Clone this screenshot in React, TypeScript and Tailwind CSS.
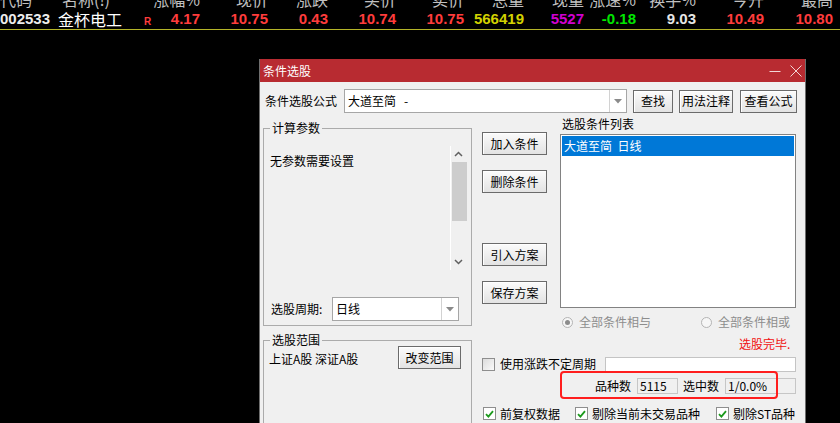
import React from "react";

const cjk = "font-['Noto_Sans_CJK_SC','Noto_Sans',sans-serif]";

const cols = [
  { head: "涨幅%", val: "4.17", w: "w-[42px]", hw: "w-[56px]", color: "text-[#ff3c3c]" },
  { head: "现价", val: "10.75", w: "w-[68px]", hw: "w-[68px]", color: "text-[#ff3c3c]" },
  { head: "涨跌", val: "0.43", w: "w-[60px]", hw: "w-[60px]", color: "text-[#ff3c3c]" },
  { head: "买价", val: "10.74", w: "w-[68px]", hw: "w-[68px]", color: "text-[#ff3c3c]" },
  { head: "卖价", val: "10.75", w: "w-[68px]", hw: "w-[68px]", color: "text-[#ff3c3c]" },
  { head: "总量", val: "566419", w: "w-[60px]", hw: "w-[60px]", color: "text-[#d2d200]" },
  { head: "现量", val: "5527", w: "w-[60px]", hw: "w-[60px]", color: "text-[#d000d0]" },
  { head: "涨速%", val: "-0.18", w: "w-[52px]", hw: "w-[52px]", color: "text-[#00e600]" },
  { head: "换手%", val: "9.03", w: "w-[60px]", hw: "w-[60px]", color: "text-[#e6e6e6]" },
  { head: "今开", val: "10.49", w: "w-[68px]", hw: "w-[68px]", color: "text-[#ff3c3c]" },
  { head: "最高", val: "10.80", w: "w-[69px]", hw: "w-[69px]", color: "text-[#ff3c3c]" },
];

function QuoteRows() {
  return (
    <div>
      <div className={`h-[10px] overflow-hidden ${cjk}`}>
        <div className="-mt-[9px] flex h-[16px] whitespace-nowrap text-[16px] leading-[16px] text-[#c0c0c0]">
          <div className="w-[62px]">代码</div>
          <div className="w-[82px]">名称(!)</div>
          {cols.map((c) => (
            <div key={c.head} className={`${c.hw} text-right`}>
              {c.head}
            </div>
          ))}
        </div>
      </div>
      <div className="flex h-[19px] items-center whitespace-nowrap">
        <div className="w-[58px] font-['Liberation_Sans',sans-serif] text-[15px] font-bold text-[#ececec]">
          002533
        </div>
        <div className={`w-[86px] text-[16px] leading-[19px] text-white ${cjk}`}>金杯电工</div>
        <div className="mt-[3px] w-[14px] font-['Liberation_Sans',sans-serif] text-[10px] font-bold text-[#ff3c3c]">
          R
        </div>
        {cols.map((c) => (
          <div
            key={c.head}
            className={`${c.w} ${c.color} text-right font-['Liberation_Sans',sans-serif] text-[15px] font-bold`}
          >
            {c.val}
          </div>
        ))}
      </div>
      <div className="h-[1px] bg-[#b4b428]" />
    </div>
  );
}

function Btn({ children, className = "" }: { children: React.ReactNode; className?: string }) {
  return (
    <div
      className={`flex h-[23px] items-center justify-center border border-[#6b6b6b] bg-gradient-to-b from-[#fbfbfb] to-[#e3e3e3] text-[12px] text-black shadow-[inset_1px_1px_0_#ffffff] ${className}`}
    >
      {children}
    </div>
  );
}

function Combo({ text, className = "" }: { text: string; className?: string }) {
  return (
    <div className={`flex border border-[#a6a6a6] bg-white ${className}`}>
      <div className="flex flex-1 items-center pl-[3px] text-[12px] text-black whitespace-pre">{text}</div>
      <div className="flex w-[17px] items-center justify-center border-l border-[#d2d2d2]">
        <svg width="8" height="5" viewBox="0 0 8 5">
          <path d="M0 0 H8 L4 4.5 Z" fill="#8a8a8a" />
        </svg>
      </div>
    </div>
  );
}

function Check({ checked }: { checked: boolean }) {
  return (
    <span
      className={`flex h-[13px] w-[13px] shrink-0 items-center justify-center border border-[#8e8e8e] ${
        checked ? "bg-white" : "bg-gradient-to-br from-[#dcdcdc] to-[#fafafa]"
      }`}
    >
      {checked && (
        <svg width="9" height="8" viewBox="0 0 9 8">
          <path d="M1 4.2 L3.4 6.6 L8 1.2" stroke="#1c9a1c" strokeWidth="1.8" fill="none" />
        </svg>
      )}
    </span>
  );
}

function Radio({ on }: { on: boolean }) {
  return (
    <span className="flex h-[11px] w-[11px] items-center justify-center rounded-full border border-[#b4b4b4] bg-[#f6f6f6]">
      {on && <span className="h-[5px] w-[5px] rounded-full bg-[#8c8c8c]" />}
    </span>
  );
}

function Chevron({ up }: { up: boolean }) {
  return (
    <svg width="9" height="6" viewBox="0 0 9 6">
      <path d={up ? "M1 5 L4.5 1.5 L8 5" : "M1 1 L4.5 4.5 L8 1"} stroke="#606060" strokeWidth="1.5" fill="none" />
    </svg>
  );
}

export default function App() {
  return (
    <div className={`h-[423px] w-[840px] overflow-hidden bg-black ${cjk}`}>
      <QuoteRows />
      <div className="ml-[259px] mt-[29px] h-[400px] w-[547px] border-x border-[#6e6e6e] bg-[#f0f0f0] text-[12px] leading-[16px] text-black">
        {/* title bar */}
        <div className="flex h-[23px] items-center bg-[#b82b31] pl-[3px] pr-[3px] text-white">
          <span className="text-[12px]">条件选股</span>
          <div className="ml-auto flex items-center gap-[9px]">
            <svg width="12" height="12" viewBox="0 0 12 12">
              <path d="M0.5 6.5 H11.5" stroke="#f2d6d6" strokeWidth="1" />
            </svg>
            <svg width="12" height="12" viewBox="0 0 12 12">
              <path d="M0.5 0.5 L11.5 11.5 M11.5 0.5 L0.5 11.5" stroke="#f2d6d6" strokeWidth="1" />
            </svg>
          </div>
        </div>

        <div className="pl-[3px]">
          {/* formula row */}
          <div className="mt-[7px] flex h-[24px] items-center">
            <div className="w-[81px] pl-[2px]">条件选股公式</div>
            <Combo text="大道至简   -" className="h-[24px] w-[283px]" />
            <Btn className="ml-[6px] w-[40px]">查找</Btn>
            <Btn className="ml-[6px] w-[54px]">用法注释</Btn>
            <Btn className="ml-[7px] w-[57px]">查看公式</Btn>
          </div>

          <div className="flex">
            {/* left column */}
            <div className="w-[209px]">
              <fieldset className="mt-[7px] h-[206px] border border-[#ababab] px-0">
                <legend className="ml-[6px] px-[2px] leading-[16px]">计算参数</legend>
                <div className="mt-[10px] flex h-[124px] pl-[6px] pr-[5px]">
                  <div className="flex-1 pt-[7px]">无参数需要设置</div>
                  <div className="flex w-[16px] flex-col items-center border-l border-white">
                    <div className="flex h-[16px] items-center justify-center">
                      <Chevron up />
                    </div>
                    <div className="ml-[1px] h-[59px] w-[15px] bg-[#cdcdcd]" />
                    <div className="flex-1" />
                    <div className="flex h-[16px] items-center justify-center">
                      <Chevron up={false} />
                    </div>
                  </div>
                </div>
                <div className="mt-[27px] flex h-[24px] items-center pl-[7px]">
                  <div className="w-[61px]">选股周期:</div>
                  <Combo text="日线" className="h-[24px] w-[127px]" />
                </div>
              </fieldset>
              <fieldset className="mt-[8px] h-[100px] border border-[#ababab] px-0">
                <legend className="ml-[6px] px-[2px] leading-[12px]">选股范围</legend>
                <div className="flex pr-[10px]">
                  <div className="mt-[5px] pl-[5px] whitespace-pre">上证A股 深证A股</div>
                  <Btn className="ml-auto w-[63px]">改变范围</Btn>
                </div>
              </fieldset>
            </div>

            {/* right block */}
            <div className="ml-[10px] w-[315px]">
              <div className="flex">
                <div className="flex w-[65px] flex-col">
                  <Btn className="mt-[19px]">加入条件</Btn>
                  <Btn className="mt-[15px]">删除条件</Btn>
                  <Btn className="mt-[50px]">引入方案</Btn>
                  <Btn className="mt-[15px]">保存方案</Btn>
                </div>
                <div className="ml-[13px] w-[237px]">
                  <div className="mt-[3px] pl-[2px]">选股条件列表</div>
                  <div className="mt-[2px] h-[174px] w-[236px] border border-[#828282] bg-white p-[1px]">
                    <div className="flex h-[20px] items-center bg-[#0078d7] pl-[2px] text-white whitespace-pre">
                      大道至简  日线
                    </div>
                  </div>
                  <div className="mt-[6px] flex h-[16px] items-center text-[#8d8d8d]">
                    <span className="ml-[2px]">
                      <Radio on />
                    </span>
                    <span className="ml-[6px]">全部条件相与</span>
                    <span className="ml-[50px]">
                      <Radio on={false} />
                    </span>
                    <span className="ml-[6px]">全部条件相或</span>
                  </div>
                </div>
              </div>

              <div className="mt-[6px] h-[16px] pl-[257px] text-[#f01010]">选股完毕.</div>

              <div className="mt-[5px] flex h-[14px] items-center">
                <Check checked={false} />
                <span className="ml-[5px]">使用涨跌不定周期</span>
                <div className="ml-auto mr-[1px] h-[15px] w-[191px] border border-[#c4c4c4] bg-white" />
              </div>

              <div className="relative mt-[7px] flex h-[16px] items-center">
                <span className="ml-[113px]">品种数</span>
                <div className="ml-[6px] flex h-[16px] w-[41px] items-center border border-[#c6c6c6] pl-[2px]">5115</div>
                <span className="ml-[5px]">选中数</span>
                <div className="ml-[6px] flex h-[16px] w-[71px] items-center border border-[#c6c6c6] pl-[2px]">1/0.0%</div>
                <div className="absolute -top-[7px] left-[78px] h-[28px] w-[218px] rounded-[4px] border-2 border-[#ff1e1e]" />
              </div>

              <div className="mt-[13px] flex h-[13px] items-center">
                <span className="ml-[1px]">
                  <Check checked />
                </span>
                <span className="ml-[4px]">前复权数据</span>
                <span className="ml-[15px]">
                  <Check checked />
                </span>
                <span className="ml-[4px]">剔除当前未交易品种</span>
                <span className="ml-[16px]">
                  <Check checked />
                </span>
                <span className="ml-[4px]">剔除ST品种</span>
              </div>
            </div>
          </div>
        </div>
      </div>
    </div>
  );
}
